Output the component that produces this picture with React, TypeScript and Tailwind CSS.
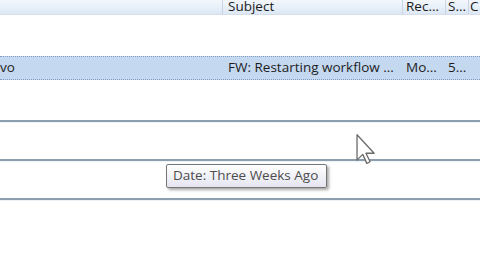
import React from "react";

const FONT = { fontFamily: '"Open Sans", "Noto Sans", "DejaVu Sans", sans-serif' };

function Cursor() {
  return (
    <svg width="22" height="31" viewBox="0 0 12 19" className="absolute left-[355px] top-[134px]">
      <path
        d="M0.5 0.5 L0.5 16 L4 12.5 L6.5 18 L8.5 17 L6 11.8 L11 11.8 Z"
        fill="#ffffff"
        stroke="#6b6b6b"
        strokeWidth="0.8"
        strokeLinejoin="round"
      />
    </svg>
  );
}

function GroupLine() {
  return <div className="h-[3px] border-t-2 border-[#8d9fae] bg-[#eef3f8]" />;
}

export default function App() {
  return (
    <div className="relative h-[270px] w-[480px] overflow-hidden bg-white text-[13.5px] text-[#1e1e1e]" style={FONT}>
      {/* column header */}
      <div className="flex h-[15px] border-b border-[#d5dfeb] bg-gradient-to-b from-[#f3f7fc] to-[#dde8f5] leading-[13px] text-[#1a1a1a]">
        <div className="w-[222px] shrink-0" />
        <div className="h-full w-[180px] shrink-0 border-l border-[#c9d5e3] pl-[5px] whitespace-nowrap">Subject</div>
        <div className="h-full w-[43px] shrink-0 border-l border-[#c9d5e3] pl-[3px] whitespace-nowrap">Rec...</div>
        <div className="h-full w-[23px] shrink-0 border-l border-[#c9d5e3] pl-[2px] whitespace-nowrap">S...</div>
        <div className="h-full flex-1 border-l border-[#c9d5e3] pl-[1px]">C</div>
      </div>

      <div className="h-[41px]" />

      {/* selected row */}
      <div className="flex h-[24px] items-center whitespace-nowrap border-y border-dotted border-[#7f9cc0] bg-[#c4d8f0] leading-none">
        <div className="w-[228px] shrink-0">vo</div>
        <div className="w-[178px] shrink-0">FW: Restarting workflow ...</div>
        <div className="w-[42px] shrink-0">Mo...</div>
        <div className="flex-1">5...</div>
      </div>

      <div className="h-[40px]" />
      <GroupLine />
      <div className="h-[36px]" />
      <GroupLine />
      <div className="h-[36px]" />
      <GroupLine />

      {/* tooltip */}
      <div className="absolute left-[166px] top-[164px] flex h-[24px] w-[161px] items-center whitespace-nowrap rounded-[2px] border border-[#767676] bg-gradient-to-b from-white to-[#e4e5f0] pl-[6px] leading-none text-[#4c4c4c] shadow-[2px_2px_3px_rgba(0,0,0,0.35)]">
        Date: Three Weeks Ago
      </div>

      <Cursor />
    </div>
  );
}
